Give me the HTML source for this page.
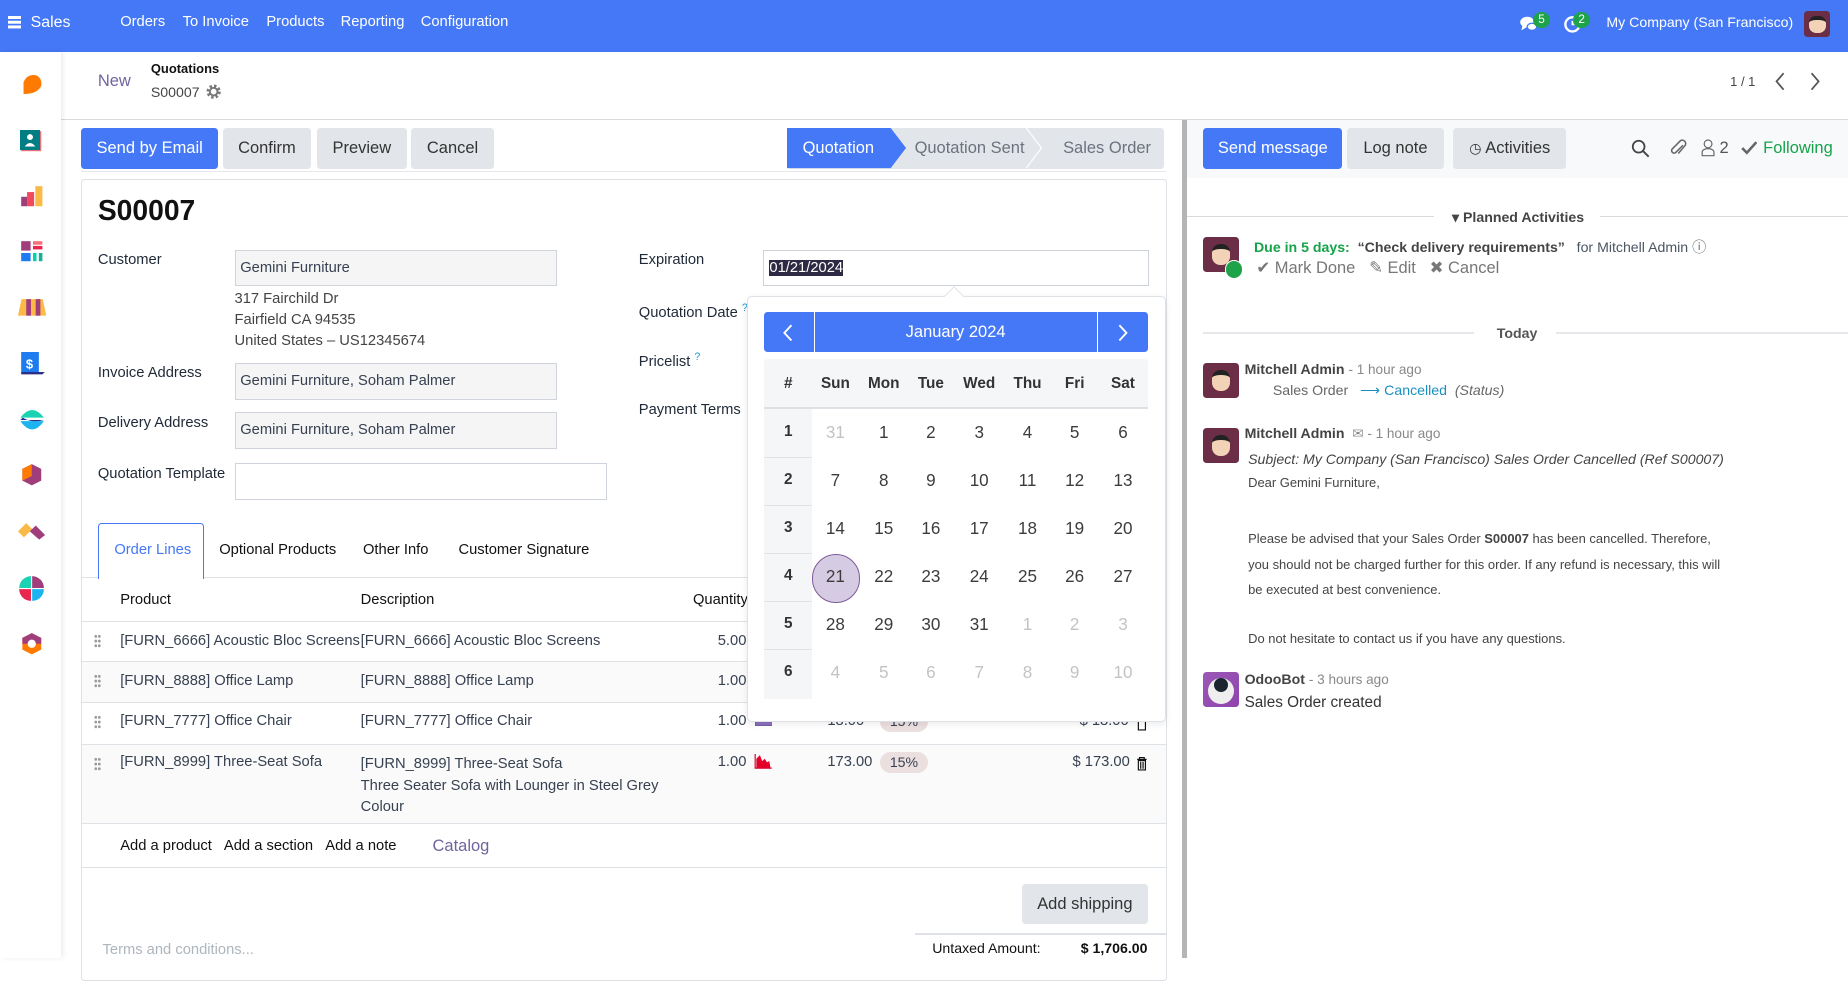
<!DOCTYPE html>
<html><head><meta charset="utf-8">
<style>
html{zoom:1.178571}
*{box-sizing:border-box;margin:0;padding:0}
body{width:1568px;height:813px;overflow:hidden;font-family:"Liberation Sans",Arial,sans-serif;font-size:12.5px;color:#374151;background:#fff;position:relative}
.a{position:absolute;white-space:nowrap}
.nav{left:0;top:0;width:1568px;height:44px;background:#4478f6;color:#fff}
.nav .a{top:12px;font-size:12.5px}
.side{left:0;top:44px;width:52px;height:769px;background:#fff;box-shadow:2px 0 4px rgba(0,0,0,.08);z-index:2}
.btn{position:absolute;height:34px;line-height:34px;text-align:center;font-size:14px;border-radius:3px;background:#e2e6ea;color:#333}
.btn.p{background:#4478f6;color:#fff}
.inp{position:absolute;height:31px;border:1px solid #ced4da;background:#f5f5f5;padding-left:4px;line-height:29px}
.lbl{position:absolute;color:#1f2937}
.cal{left:634px;top:251px;width:355px;height:362px;background:#fff;border:1px solid #dee2e6;border-radius:4px;z-index:5;box-shadow:0 2px 6px rgba(0,0,0,.08)}
.cal .c{position:absolute;width:40px;text-align:center;font-size:14.5px;color:#3c3c3c}
.cal .h{font-weight:bold;font-size:13px;color:#333}
.g{color:#c3c3c3!important}
.row{position:absolute;left:70px;width:919px;border-top:1px solid #dee2e6}
.drag{position:absolute;left:80px;width:6px;height:12px;background:radial-gradient(circle,#999 1.1px,transparent 1.3px) 0 0/3px 4px}
.ch{color:#4b5563}
</style></head><body>

<div class="a nav">
  <div class="a" style="left:7px;top:14px;width:11px;height:2px;background:#fff;box-shadow:0 4px 0 #fff,0 8px 0 #fff"></div>
  <div class="a" style="left:26px;font-size:13.5px">Sales</div>
  <div class="a" style="left:102px">Orders</div>
  <div class="a" style="left:155px">To Invoice</div>
  <div class="a" style="left:226px">Products</div>
  <div class="a" style="left:289px">Reporting</div>
  <div class="a" style="left:357px">Configuration</div>
  <svg class="a" style="left:1289px;top:13px" width="16" height="15" viewBox="0 0 16 15"><ellipse cx="7" cy="6" rx="6" ry="4.5" fill="#fff"/><path d="M3 9 L2 13 L7 10Z" fill="#fff"/><ellipse cx="11" cy="10" rx="4" ry="3" fill="#fff" stroke="#4478f6"/></svg>
  <div class="a" style="left:1301px;top:10px;width:14px;height:14px;border-radius:7px;background:#1fa34a;font-size:10px;text-align:center;line-height:14px">5</div>
  <svg class="a" style="left:1326px;top:13px" width="16" height="16" viewBox="0 0 16 16"><circle cx="8" cy="8" r="6" fill="none" stroke="#fff" stroke-width="2"/><path d="M8 5v3h2" stroke="#fff" stroke-width="1.5" fill="none"/></svg>
  <div class="a" style="left:1335px;top:10px;width:14px;height:14px;border-radius:7px;background:#1fa34a;font-size:10px;text-align:center;line-height:14px">2</div>
  <div class="a" style="left:1363px;font-size:12px">My Company (San Francisco)</div>
  <div class="a" style="left:1531px;top:9px;width:22px;height:22px;border-radius:3px;background:#6b2e46"><div style="margin:5px 4px;width:14px;height:14px;border-radius:6px;background:#f3d3b8;border-top:4px solid #222"></div></div>
</div>

<div class="a side">
  <svg class="a" style="left:17px;top:19px" width="20" height="18"><path d="M3 17 L3 7 Q6 0 13 1 Q19 3 18 10 Q15 17 3 17Z" fill="#ff7a00"/></svg>
  <svg class="a" style="left:17px;top:66px" width="20" height="20"><rect x="1" y="1" width="17" height="17" fill="#f4707a"/><rect x="0" y="0" width="17" height="17" fill="#017e84"/><circle cx="8.5" cy="6" r="2.5" fill="#fff"/><path d="M4 14 Q8.5 8 13 14Z" fill="#fff"/></svg>
  <svg class="a" style="left:17px;top:113px" width="20" height="20"><rect x="1" y="10" width="5" height="8" fill="#a03d7b"/><rect x="6" y="6" width="6" height="12" fill="#f24a5a"/><rect x="13" y="1" width="6" height="17" fill="#fbb945"/></svg>
  <svg class="a" style="left:17px;top:160px" width="20" height="20"><rect x="1" y="1" width="8" height="8" fill="#a03d7b"/><rect x="11" y="1" width="8" height="3" fill="#f4707a"/><rect x="11" y="5" width="8" height="3" fill="#e8264e"/><rect x="1" y="11" width="8" height="7" fill="#1f7cf0"/><rect x="11" y="11" width="3" height="7" fill="#00d3b2"/><rect x="16" y="11" width="3" height="7" fill="#17b18e"/></svg>
  <svg class="a" style="left:15px;top:209px" width="24" height="16"><path d="M3 1h18l3 14H0z" fill="#fbb945"/><rect x="7" y="1" width="4" height="14" fill="#a03d7b"/><rect x="15" y="1" width="4" height="14" fill="#a03d7b"/></svg>
  <svg class="a" style="left:17px;top:255px" width="22" height="20"><rect x="1" y="0" width="15" height="17" fill="#1f7cf0"/><path d="M1 17h20l-2 2H1z" fill="#2a3185"/><text x="5" y="14" fill="#fff" font-size="11" font-weight="bold" font-family="Liberation Sans">$</text></svg>
  <svg class="a" style="left:15px;top:301px" width="24" height="22"><path d="M2 9 Q12 -4 22 9Z" fill="#1bd3b2"/><path d="M2 12 Q12 26 22 12Z" fill="#1cb4f0"/><path d="M4 9 Q12 14 22 11 L2 11Z" fill="#2a3185"/></svg>
  <svg class="a" style="left:17px;top:349px" width="20" height="20"><path d="M10 1l8 4v10l-8 4-8-4V5z" fill="#a03d7b"/><path d="M2 5l8-4v10l-8 4z" fill="#ff7a00"/></svg>
  <svg class="a" style="left:15px;top:399px" width="24" height="16"><path d="M0 8l7-7 5 5-7 7z" fill="#fbb945"/><path d="M10 8l5-5 8 8-5 4z" fill="#a03d7b"/></svg>
  <svg class="a" style="left:15px;top:444px" width="23" height="22"><path d="M11 1A10 10 0 0 0 1 11h10z" fill="#1bd3b2"/><path d="M12 1a10 10 0 0 1 10 10H12z" fill="#a03d7b"/><path d="M1 12a10 10 0 0 0 10 10V12z" fill="#e8264e"/><path d="M12 12h10a10 10 0 0 1-10 10z" fill="#1cb4f0"/></svg>
  <svg class="a" style="left:17px;top:492px" width="20" height="20"><path d="M10 1l8 4v10l-8 4-8-4V5z" fill="#ff7a00"/><path d="M10 1l8 4v5H2V5z" fill="#a03d7b"/><circle cx="10" cy="10" r="3.5" fill="#fff"/></svg>
</div>

<div class="a" style="left:83px;top:61px;font-size:14px;color:#71639e">New</div>
<div class="a" style="left:128px;top:52px;font-size:11px;font-weight:bold;color:#111">Quotations</div>
<div class="a" style="left:128px;top:71px;font-size:12px;color:#444">S00007</div>
<svg class="a" style="left:175px;top:71px" width="13" height="13" viewBox="0 0 12 12"><circle cx="6" cy="6" r="4.3" fill="none" stroke="#777" stroke-width="2.6" stroke-dasharray="1.8 1.6"/><circle cx="6" cy="6" r="3" fill="none" stroke="#777" stroke-width="1.5"/></svg>
<div class="a" style="left:1468px;top:63px;font-size:11px;color:#444">1 / 1</div>
<svg class="a" style="left:1504px;top:61px" width="12" height="16"><path d="M9 1L3 8l6 7" stroke="#555" stroke-width="1.5" fill="none"/></svg>
<svg class="a" style="left:1534px;top:61px" width="12" height="16"><path d="M3 1l6 7-6 7" stroke="#555" stroke-width="1.5" fill="none"/></svg>
<div class="a" style="left:52px;top:101px;width:1516px;height:1px;background:#d8dadd"></div>

<div class="btn p" style="left:69px;top:109px;width:116px">Send by Email</div>
<div class="btn" style="left:189px;top:109px;width:75px">Confirm</div>
<div class="btn" style="left:269px;top:109px;width:76px">Preview</div>
<div class="btn" style="left:349px;top:109px;width:70px">Cancel</div>
<div class="a" style="left:668px;top:109px;width:320px;height:34px;background:#e2e6ea;border-radius:3px"></div>
<svg class="a" style="left:668px;top:109px" width="320" height="34"><path d="M0 0H88L101 17L88 34H0Z" fill="#4478f6"/><path d="M203 0L216 17L203 34" stroke="#fff" fill="none"/></svg>
<div class="a" style="left:681px;top:118px;font-size:14px;color:#fff">Quotation</div>
<div class="a" style="left:776px;top:118px;font-size:14px;color:#6b7280">Quotation Sent</div>
<div class="a" style="left:902px;top:118px;font-size:14px;color:#6b7280">Sales Order</div>
<div class="a" style="left:69px;top:145px;width:920px;height:1px;background:#e5e7eb"></div>

<div class="a" style="left:69px;top:152px;width:921px;height:680px;border:1px solid #dee2e6;border-radius:3px"></div>
<div class="a" style="left:83px;top:165px;font-size:24px;font-weight:bold;color:#111">S00007</div>

<div class="lbl" style="left:83px;top:214px">Customer</div>
<div class="inp" style="left:199px;top:212px;width:274px">Gemini Furniture</div>
<div class="a" style="left:199px;top:245px;line-height:18px;color:#444">317 Fairchild Dr<br>Fairfield CA 94535<br>United States – US12345674</div>
<div class="lbl" style="left:83px;top:310px">Invoice Address</div>
<div class="inp" style="left:199px;top:308px;width:274px">Gemini Furniture, Soham Palmer</div>
<div class="lbl" style="left:83px;top:352px">Delivery Address</div>
<div class="inp" style="left:199px;top:350px;width:274px">Gemini Furniture, Soham Palmer</div>
<div class="lbl" style="left:83px;top:395px">Quotation Template</div>
<div class="inp" style="left:199px;top:393px;width:316px;background:#fff"></div>

<div class="lbl" style="left:542px;top:214px">Expiration</div>
<div class="inp" style="left:647px;top:212px;width:328px;background:#fff"><span style="background:#2e2a43;color:#fff;margin-left:1px">01/21/2024</span></div>
<div class="lbl" style="left:542px;top:256px">Quotation Date <sup style="color:#1a9bd7;font-size:9px">?</sup></div>
<div class="lbl" style="left:542px;top:298px">Pricelist <sup style="color:#1a9bd7;font-size:9px">?</sup></div>
<div class="lbl" style="left:542px;top:341px">Payment Terms</div>

<div class="a" style="left:83px;top:444px;width:90px;height:47px;border:1px solid #4478f6;border-bottom:none;border-radius:3px 3px 0 0;background:#fff;z-index:1"></div>
<div class="a" style="left:97px;top:460px;color:#4478f6;z-index:1">Order Lines</div>
<div class="a" style="left:186px;top:460px;color:#111">Optional Products</div>
<div class="a" style="left:308px;top:460px;color:#111">Other Info</div>
<div class="a" style="left:389px;top:460px;color:#111">Customer Signature</div>

<div class="row" style="top:490px;height:37px"></div>
<div class="a" style="left:102px;top:502px;color:#111">Product</div>
<div class="a" style="left:306px;top:502px;color:#111">Description</div>
<div class="a" style="left:588px;top:502px;color:#111">Quantity</div>

<div class="row" style="top:527px;height:34px"></div>
<div class="drag" style="top:538px"></div>
<div class="a" style="left:102px;top:537px">[FURN_6666] Acoustic Bloc Screens</div>
<div class="a" style="left:306px;top:537px">[FURN_6666] Acoustic Bloc Screens</div>
<div class="a" style="left:609px;top:537px">5.00</div>

<div class="row" style="top:561px;height:35px;background:#fafafa"></div>
<div class="drag" style="top:572px"></div>
<div class="a" style="left:102px;top:571px">[FURN_8888] Office Lamp</div>
<div class="a" style="left:306px;top:571px">[FURN_8888] Office Lamp</div>
<div class="a" style="left:609px;top:571px">1.00</div>

<div class="row" style="top:596px;height:35px"></div>
<div class="drag" style="top:607px"></div>
<div class="a" style="left:102px;top:605px">[FURN_7777] Office Chair</div>
<div class="a" style="left:306px;top:605px">[FURN_7777] Office Chair</div>
<div class="a" style="left:609px;top:605px">1.00</div>
<div class="a" style="left:641px;top:606px;width:14px;height:10px;border-left:1px solid #71639e;border-bottom:1px solid #71639e;background:#8b6fc0"></div>
<div class="a" style="left:702px;top:605px">18.00</div>
<div class="a" style="left:747px;top:603px;width:40px;height:18px;border-radius:9px;background:#ebdfdf;text-align:center;line-height:18px;font-size:12px">15%</div>
<div class="a" style="left:916px;top:605px">$ 18.00</div>

<div class="row" style="top:631px;height:68px;background:#fafafa"></div>
<div class="drag" style="top:642px"></div>
<div class="a" style="left:102px;top:640px">[FURN_8999] Three-Seat Sofa</div>
<div class="a" style="left:306px;top:640px;line-height:18px">[FURN_8999] Three-Seat Sofa<br>Three Seater Sofa with Lounger in Steel Grey<br>Colour</div>
<div class="a" style="left:609px;top:640px">1.00</div>
<svg class="a" style="left:640px;top:640px" width="16" height="13"><path d="M1 0V12H15" stroke="#d6002a" fill="none"/><path d="M2 12V4L5 1 7 6 9 4 11 7 13 6 14 12Z" fill="#e4002b"/></svg>
<div class="a" style="left:702px;top:640px">173.00</div>
<div class="a" style="left:747px;top:638px;width:40px;height:18px;border-radius:9px;background:#ebdfdf;text-align:center;line-height:18px;font-size:12px">15%</div>
<div class="a" style="left:910px;top:640px">$ 173.00</div>
<svg class="a" style="left:964px;top:642px" width="10" height="12"><path d="M1 2h8M3 2V0.5h4V2M2 3h6v8H2z" stroke="#111" fill="none"/><path d="M4 4v6M6 4v6" stroke="#111"/></svg>
<svg class="a" style="left:964px;top:608px" width="10" height="12"><path d="M1 2h8M3 2V0.5h4V2M2 3h6v8H2z" stroke="#111" fill="none"/></svg>

<div class="row" style="top:698px;height:38px"></div>
<div class="a" style="left:102px;top:711px;color:#111">Add a product</div>
<div class="a" style="left:190px;top:711px;color:#111">Add a section</div>
<div class="a" style="left:276px;top:711px;color:#111">Add a note</div>
<div class="a" style="left:367px;top:710px;font-size:14px;color:#71639e">Catalog</div>
<div class="row" style="top:736px;height:1px"></div>

<div class="btn" style="left:867px;top:750px;width:107px">Add shipping</div>
<div class="a" style="left:776px;top:792px;width:213px;height:1px;background:#dee2e6"></div>
<div class="a" style="left:87px;top:799px;color:#adb5bd">Terms and conditions...</div>
<div class="a" style="left:791px;top:798px;font-size:12px;color:#111">Untaxed Amount:</div>
<div class="a" style="left:917px;top:798px;font-size:12px;font-weight:bold;color:#111">$ 1,706.00</div>

<div class="a cal">
  <div class="a" style="left:169px;top:-7px;width:12px;height:12px;background:#fff;border-left:1px solid #dee2e6;border-top:1px solid #dee2e6;transform:rotate(45deg)"></div>
  <div class="a" style="left:13px;top:13px;width:326px;height:34px;background:#4478f6;border-radius:3px"></div>
  <div class="a" style="left:56px;top:13px;width:1px;height:34px;background:#fff"></div>
  <div class="a" style="left:296px;top:13px;width:1px;height:34px;background:#fff"></div>
  <svg class="a" style="left:29px;top:23px" width="10" height="15"><path d="M8 1L2 7.5 8 14" stroke="#fff" stroke-width="1.6" fill="none"/></svg>
  <svg class="a" style="left:313px;top:23px" width="10" height="15"><path d="M2 1l6 6.5L2 14" stroke="#fff" stroke-width="1.6" fill="none"/></svg>
  <div class="a" style="left:56px;top:22px;width:240px;text-align:center;color:#fff;font-size:14px">January 2024</div>
  <div class="a" style="left:13px;top:53px;width:326px;height:42px;background:#f5f6f7;border-bottom:2px solid #dee2e6;border-radius:3px 3px 0 0"></div>
  <div class="a" style="left:13px;top:95px;width:41px;height:246px;background:#f5f6f7"></div>
  <div id="cg"></div>
</div>

<div class="a" style="left:1003px;top:102px;width:4px;height:711px;background:#b5b5b5"></div>

<div class="a" style="left:1007px;top:102px;width:561px;height:49px;background:#f8f9fa"></div>
<div class="btn p" style="left:1021px;top:109px;width:118px">Send message</div>
<div class="btn" style="left:1143px;top:109px;width:82px">Log note</div>
<div class="btn" style="left:1233px;top:109px;width:96px"><span style="font-size:12px">&#9719;</span> Activities</div>
<svg class="a" style="left:1384px;top:118px" width="16" height="16"><circle cx="6.5" cy="6.5" r="5" stroke="#444" stroke-width="1.5" fill="none"/><path d="M10 10l5 5" stroke="#444" stroke-width="1.6"/></svg>
<svg class="a" style="left:1417px;top:116px" width="16" height="18"><path d="M11 7L5 13a2 2 0 0 1-3-3L9 3a3 3 0 0 1 4 4L7 14" stroke="#666" stroke-width="1.3" fill="none"/></svg>
<svg class="a" style="left:1443px;top:117px" width="14" height="16"><circle cx="6" cy="5" r="3.3" stroke="#666" fill="none"/><path d="M1 15V12a5 3 0 0 1 10 0v3z" stroke="#666" fill="none"/></svg>
<div class="a" style="left:1459px;top:118px;font-size:14px;color:#555">2</div>
<svg class="a" style="left:1477px;top:120px" width="14" height="12"><path d="M1 6l4 4 8-9" stroke="#666" stroke-width="2.2" fill="none"/></svg>
<div class="a" style="left:1496px;top:118px;font-size:14px;color:#16a34a">Following</div>

<div class="a" style="left:1007px;top:183px;width:210px;height:1px;background:#d8dadd"></div>
<div class="a" style="left:1358px;top:183px;width:210px;height:1px;background:#d8dadd"></div>
<div class="a" style="left:1232px;top:177px;font-size:12px;font-weight:bold;color:#444">▾ Planned Activities</div>

<div class="a" style="left:1021px;top:201px;width:30px;height:30px;border-radius:3px;background:#6b2e46"><div style="margin:6px 7px;width:16px;height:18px;border-radius:7px;background:#f3d3b8;border-top:5px solid #222"></div></div>
<div class="a" style="left:1039px;top:221px;width:16px;height:16px;border-radius:8px;background:#1fa34a;border:1px solid #fff"></div>
<div class="a" style="left:1064px;top:201px;font-size:12px"><b style="color:#16a34a">Due in 5 days:</b> &nbsp;<b style="color:#444">“Check delivery requirements”</b> &nbsp; <span class="ch">for Mitchell Admin</span> <span style="color:#666">&#9432;</span></div>
<div class="a" style="left:1066px;top:219px;font-size:14px;color:#777">✔ Mark Done &nbsp; ✎ Edit &nbsp; ✖ Cancel</div>

<div class="a" style="left:1021px;top:282px;width:230px;height:1px;background:#e5e7eb"></div>
<div class="a" style="left:1320px;top:282px;width:248px;height:1px;background:#e5e7eb"></div>
<div class="a" style="left:1270px;top:276px;font-size:12px;font-weight:bold;color:#555">Today</div>

<div class="a" style="left:1021px;top:308px;width:30px;height:30px;border-radius:3px;background:#6b2e46"><div style="margin:6px 7px;width:16px;height:18px;border-radius:7px;background:#f3d3b8;border-top:5px solid #222"></div></div>
<div class="a" style="left:1056px;top:306px;font-size:12px"><b style="color:#444">Mitchell Admin</b> <span style="color:#888;font-size:11.5px">- 1 hour ago</span></div>
<div class="a" style="left:1080px;top:324px;color:#666;font-size:12px">Sales Order &nbsp;&nbsp;<span style="color:#1a8fc0">⟶ Cancelled</span> &nbsp;<i>(Status)</i></div>

<div class="a" style="left:1021px;top:363px;width:30px;height:30px;border-radius:3px;background:#6b2e46"><div style="margin:6px 7px;width:16px;height:18px;border-radius:7px;background:#f3d3b8;border-top:5px solid #222"></div></div>
<div class="a" style="left:1056px;top:361px;font-size:12px"><b style="color:#444">Mitchell Admin</b> <span style="color:#888;font-size:11.5px">&nbsp;✉ - 1 hour ago</span></div>
<div class="a" style="left:1059px;top:383px;font-style:italic;color:#444;font-size:12px">Subject: My Company (San Francisco) Sales Order Cancelled (Ref S00007)</div>
<div class="a" style="left:1059px;top:403px;font-size:11px;color:#444">Dear Gemini Furniture,</div>
<div class="a" style="left:1059px;top:446px;font-size:11px;color:#444;line-height:22px">Please be advised that your Sales Order <b>S00007</b> has been cancelled. Therefore,<br>you should not be charged further for this order. If any refund is necessary, this will<br>be executed at best convenience.</div>
<div class="a" style="left:1059px;top:535px;font-size:11px;color:#444">Do not hesitate to contact us if you have any questions.</div>

<div class="a" style="left:1021px;top:570px;width:30px;height:30px;border-radius:3px;background:linear-gradient(135deg,#9b59b6,#8e44ad)"><div style="margin:4px;width:22px;height:22px;border-radius:11px;background:#eee"><div style="margin:5px;width:12px;height:12px;border-radius:6px;background:#1b2530"></div></div></div>
<div class="a" style="left:1056px;top:569px;font-size:12px"><b style="color:#444">OdooBot</b> <span style="color:#888;font-size:11.5px">- 3 hours ago</span></div>
<div class="a" style="left:1056px;top:589px;color:#333;font-size:13px">Sales Order created</div>

<script>
var cg=document.getElementById('cg'),h='';
var xs=[14,54,95,135,176,217,257,298];
var hd=['#','Sun','Mon','Tue','Wed','Thu','Fri','Sat'];
for(var i=0;i<8;i++)h+='<div class="c h" style="left:'+xs[i]+'px;top:66px">'+hd[i]+'</div>';
var d=[[31,1,2,3,4,5,6],[7,8,9,10,11,12,13],[14,15,16,17,18,19,20],[21,22,23,24,25,26,27],[28,29,30,31,1,2,3],[4,5,6,7,8,9,10]];
for(var r=0;r<6;r++){var y=107+r*40.8;
 if(r>0)h+='<div class="a" style="left:13px;top:'+(95+r*40.8)+'px;width:41px;height:1px;background:#dee2e6"></div>';
 h+='<div class="c h" style="left:14px;top:'+y+'px">'+(r+1)+'</div>';
 for(var c=0;c<7;c++){var g=(r==0&&c==0)||(r==4&&c>3)||r==5;
  if(r==3&&c==0)h+='<div class="a" style="left:54px;top:'+(y-11)+'px;width:41px;height:41px;border-radius:21px;background:#d5cce3;border:1px solid #7f5a99"></div>';
  h+='<div class="c'+(g?' g':'')+'" style="left:'+xs[c+1]+'px;top:'+y+'px">'+d[r][c]+'</div>';}}
cg.innerHTML=h;
</script>
</body></html>
